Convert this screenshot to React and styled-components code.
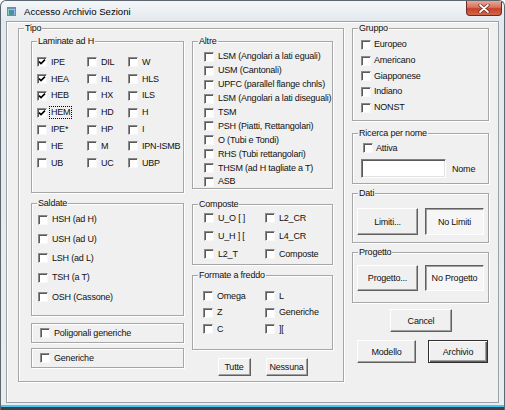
import React from 'react'
import styled, { createGlobalStyle, css } from 'styled-components'

const Global = createGlobalStyle`
  html, body { margin: 0; padding: 0; background: #fff; }
  body {
    font-family: "Liberation Sans", Arial, sans-serif;
    font-size: 9px;
    letter-spacing: -0.2px;
    color: #111;
  }
`

const Window = styled.div`
  width: 505px;
  height: 410px;
  box-sizing: border-box;
  display: flex;
  flex-direction: column;
  background: linear-gradient(#f4f7f9, #e3e9ee 20px, #e8edf1);
  border: 1px solid #5c6770;
  border-bottom: none;
  border-radius: 6px 6px 0 0;
  overflow: hidden;
`

const TitleBar = styled.div`
  height: 20px;
  display: flex;
  align-items: flex-start;
  flex-shrink: 0;
`

const TitleIcon = styled.svg`
  margin: 6px 0 0 6px;
`

const TitleText = styled.span`
  margin: 5px 0 0 8px;
  font-size: 9.6px;
  letter-spacing: 0;
  line-height: 12px;
  color: #000;
`

const CloseBtn = styled.div`
  margin-left: auto;
  margin-right: 2px;
  width: 36px;
  height: 15px;
  box-sizing: border-box;
  border: 1px solid #6e2a22;
  border-top: none;
  border-radius: 0 0 4px 4px;
  background: linear-gradient(#e9a898, #d8735a 45%, #c4422b 55%, #d2684c);
  display: flex;
  align-items: center;
  justify-content: center;
`

const Client = styled.div`
  flex: 1;
  margin: 0 5px;
  box-sizing: border-box;
  background: #f0f0f0;
  border: 1px solid #9ba1a6;
  box-shadow: inset 1px 1px 0 #fff;
  padding: 6px 9px 0 11px;
  display: flex;
  gap: 8px;
`

const BottomEdge = styled.div`
  height: 7px;
  flex-shrink: 0;
  background: linear-gradient(#e8edf1 0, #e8edf1 2px, #46c6ee 2px, #46c6ee 4px, #3a4148 4px);
`

const Box = styled.div`
  position: relative;
  box-sizing: border-box;
  border: 1px solid #a6a6a6;
  box-shadow: 1px 1px 0 #fff, inset 1px 1px 0 #fff;
  width: ${p => p.$w}px;
  height: ${p => p.$h}px;
  padding: ${p => p.$pad || '0'};
  flex-shrink: 0;
`

const Legend = styled.span`
  position: absolute;
  top: -6px;
  left: 5px;
  padding: 0 1px;
  line-height: 11px;
  background: #f0f0f0;
  white-space: nowrap;
`

const Column = styled.div`
  display: flex;
  flex-direction: column;
  align-items: ${p => p.$align || 'stretch'};
`

const Gap = styled.div`
  height: ${p => p.$h}px;
  flex-shrink: 0;
`

const Grid = styled.div`
  display: grid;
  grid-template-columns: ${p => p.$cols || '1fr'};
  grid-auto-rows: ${p => p.$row}px;
`

const Row = styled.label`
  display: flex;
  align-items: center;
  gap: ${p => p.$gap ?? 4}px;
  white-space: nowrap;
  line-height: 11px;
`

const Check = styled.span`
  width: 10px;
  height: 10px;
  box-sizing: border-box;
  flex-shrink: 0;
  background: #fff;
  border-top: 1px solid #8a8a8a;
  border-left: 1px solid #8a8a8a;
  border-right: 1px solid #f8f8f8;
  border-bottom: 1px solid #f8f8f8;
  box-shadow: inset 1px 1px 0 #5a5a5a;
  display: flex;
  align-items: center;
  justify-content: center;
`

const Text = styled.span`
  ${p => p.$focus && css`
    outline: 1px dotted #000;
    outline-offset: 0;
    padding: 0 1px;
    margin-left: -1px;
  `}
`

const btnVariants = {
  normal: css`
    border-top: 1px solid #fff;
    border-left: 1px solid #fff;
    border-right: 1px solid #606060;
    border-bottom: 1px solid #606060;
    box-shadow: inset -1px -1px 0 #a0a0a0;
  `,
  pressed: css`
    background: #f6f6f6;
    border-top: 1px solid #606060;
    border-left: 1px solid #606060;
    border-right: 1px solid #fff;
    border-bottom: 1px solid #fff;
    box-shadow: inset 1px 1px 0 #a0a0a0;
  `,
  default: css`
    border: 1px solid #303030;
    box-shadow: inset 1px 1px 0 #fff, inset -1px -1px 0 #606060, inset -2px -2px 0 #a0a0a0;
  `
}

const Button = styled.div`
  box-sizing: border-box;
  width: ${p => p.$w}px;
  height: ${p => p.$h}px;
  background: #f0f0f0;
  display: flex;
  align-items: center;
  justify-content: center;
  white-space: nowrap;
  flex-shrink: 0;
  ${p => btnVariants[p.$v || 'normal']}
`

const ButtonRow = styled.div`
  display: flex;
  gap: ${p => p.$gap}px;
  padding-left: ${p => p.$left || 0}px;
  justify-content: ${p => p.$center ? 'center' : 'flex-start'};
`

const TextInput = styled.div`
  width: 85px;
  height: 19px;
  box-sizing: border-box;
  background: #fff;
  border-top: 1px solid #808080;
  border-left: 1px solid #808080;
  border-right: 1px solid #fff;
  border-bottom: 1px solid #fff;
  box-shadow: inset 1px 1px 0 #5a5a5a, inset -1px -1px 0 #e3e3e3;
`

const NomeRow = styled.div`
  display: flex;
  align-items: center;
  gap: 6px;
  padding-left: 8px;
`

const CheckMark = () => (
  <svg width="8" height="8" viewBox="0 0 8 8">
    <path d="M1 3.6 L3 5.6 L7 1.6" fill="none" stroke="#000" strokeWidth="1.6" />
  </svg>
)

const Item = ({ label, checked, focus, gap }) => (
  <Row $gap={gap}>
    <Check>{checked && <CheckMark />}</Check>
    <Text $focus={focus}>{label}</Text>
  </Row>
)

const laminate = [
  ['IPE', true], ['DIL'], ['W'],
  ['HEA', true], ['HL'], ['HLS'],
  ['HEB', true], ['HX'], ['ILS'],
  ['HEM', true, true], ['HD'], ['H'],
  ['IPE*'], ['HP'], ['I'],
  ['HE'], ['M'], ['IPN-ISMB'],
  ['UB'], ['UC'], ['UBP']
]

const saldate = ['HSH (ad H)', 'USH (ad U)', 'LSH (ad L)', 'TSH (a T)', 'OSH (Cassone)']

const altre = [
  'LSM (Angolari a lati eguali)',
  'USM (Cantonali)',
  'UPFC (parallel flange chnls)',
  'LSM (Angolari a lati diseguali)',
  'TSM',
  'PSH (Piatti, Rettangolari)',
  'O (Tubi e Tondi)',
  'RHS (Tubi rettangolari)',
  'THSM (ad H tagliate a T)',
  'ASB'
]

const composte = ['U_O [ ]', 'L2_CR', 'U_H ] [', 'L4_CR', 'L2_T', 'Composte']
const formate = ['Omega', 'L', 'Z', 'Generiche', 'C', '][']
const gruppo = ['Europeo', 'Americano', 'Giapponese', 'Indiano', 'NONST']

export default function App() {
  return (
    <>
      <Global />
      <Window>
        <TitleBar>
          <TitleIcon width="9" height="9" viewBox="0 0 9 9">
            <rect x="0.5" y="0.5" width="8" height="8" fill="#e8eef2" stroke="#7a8a96" />
            <rect x="1" y="1" width="7" height="1.5" fill="#6f8fb5" />
            <rect x="1.5" y="3" width="2.5" height="5" fill="#3aa07a" />
            <rect x="4" y="3" width="3.5" height="5" fill="#4f86c6" />
          </TitleIcon>
          <TitleText>Accesso Archivio Sezioni</TitleText>
          <CloseBtn>
            <svg width="12" height="9" viewBox="0 0 12 9">
              <path d="M2 1 L10 8 M10 1 L2 8" stroke="#6b2a20" strokeWidth="3.2" strokeLinecap="round" />
              <path d="M2 1 L10 8 M10 1 L2 8" stroke="#fff" strokeWidth="1.7" strokeLinecap="round" />
            </svg>
          </CloseBtn>
        </TitleBar>
        <Client>
          <Box $w={326} $h={354} $pad="12px 10px 0 12px">
            <Legend>Tipo</Legend>
            <div style={{ display: 'flex', gap: 8 }}>
              <Column>
                <Box $w={153} $h={152} $pad="12px 0 0 5px">
                  <Legend>Laminate ad H</Legend>
                  <Grid $cols="50px 41px 1fr" $row={16.8}>
                    {laminate.map(([l, c, f]) => (
                      <Item key={l} label={l} checked={c} focus={f} />
                    ))}
                  </Grid>
                </Box>
                <Gap $h={10} />
                <Box $w={153} $h={113} $pad="6px 0 0 6px">
                  <Legend>Saldate</Legend>
                  <Grid $row={19.4}>
                    {saldate.map(l => <Item key={l} label={l} />)}
                  </Grid>
                </Box>
                <Gap $h={7} />
                <Box $w={153} $h={20} $pad="0 0 0 8px">
                  <Grid $row={18}>
                    <Item label="Poligonali generiche" />
                  </Grid>
                </Box>
                <Gap $h={5} />
                <Box $w={153} $h={20} $pad="0 0 0 8px">
                  <Grid $row={18}>
                    <Item label="Generiche" />
                  </Grid>
                </Box>
              </Column>
              <Column>
                <Box $w={141} $h={148} $pad="8px 0 0 11px">
                  <Legend>Altre</Legend>
                  <Grid $row={13.9}>
                    {altre.map(l => <Item key={l} label={l} />)}
                  </Grid>
                </Box>
                <Gap $h={15} />
                <Box $w={141} $h={61} $pad="4px 0 0 11px">
                  <Legend>Composte</Legend>
                  <Grid $cols="61px 1fr" $row={18.2}>
                    {composte.map(l => <Item key={l} label={l} />)}
                  </Grid>
                </Box>
                <Gap $h={10} />
                <Box $w={141} $h={75} $pad="12px 0 0 10px">
                  <Legend>Formate a freddo</Legend>
                  <Grid $cols="62px 1fr" $row={16.5}>
                    {formate.map(l => <Item key={l} label={l} />)}
                  </Grid>
                </Box>
                <Gap $h={8} />
                <ButtonRow $gap={15} $center>
                  <Button $w={33} $h={18}>Tutte</Button>
                  <Button $w={42} $h={18}>Nessuna</Button>
                </ButtonRow>
              </Column>
            </div>
          </Box>
          <Column>
            <Box $w={137} $h={93} $pad="8px 0 0 8px">
              <Legend>Gruppo</Legend>
              <Grid $row={15.7}>
                {gruppo.map(l => <Item key={l} label={l} gap={3} />)}
              </Grid>
            </Box>
            <Gap $h={12} />
            <Box $w={137} $h={51} $pad="8px 0 0 0">
              <Legend>Ricerca per nome</Legend>
              <Grid $row={12} style={{ paddingLeft: 10 }}>
                <Item label="Attiva" gap={3} />
              </Grid>
              <Gap $h={5} />
              <NomeRow>
                <TextInput />
                <span>Nome</span>
              </NomeRow>
            </Box>
            <Gap $h={9} />
            <Box $w={137} $h={50} $pad="14px 0 0 4px">
              <Legend>Dati</Legend>
              <ButtonRow $gap={7}>
                <Button $w={61} $h={27}>Limiti...</Button>
                <Button $w={59} $h={27} $v="pressed">No Limiti</Button>
              </ButtonRow>
            </Box>
            <Gap $h={9} />
            <Box $w={137} $h={51} $pad="12px 0 0 4px">
              <Legend>Progetto</Legend>
              <ButtonRow $gap={7}>
                <Button $w={61} $h={26}>Progetto...</Button>
                <Button $w={59} $h={26} $v="pressed">No Progetto</Button>
              </ButtonRow>
            </Box>
            <Gap $h={6} />
            <ButtonRow $gap={0} $left={38}>
              <Button $w={62} $h={23}>Cancel</Button>
            </ButtonRow>
            <Gap $h={8} />
            <ButtonRow $gap={12} $left={5}>
              <Button $w={59} $h={23}>Modello</Button>
              <Button $w={60} $h={23} $v="default">Archivio</Button>
            </ButtonRow>
          </Column>
        </Client>
        <BottomEdge />
      </Window>
    </>
  )
}
